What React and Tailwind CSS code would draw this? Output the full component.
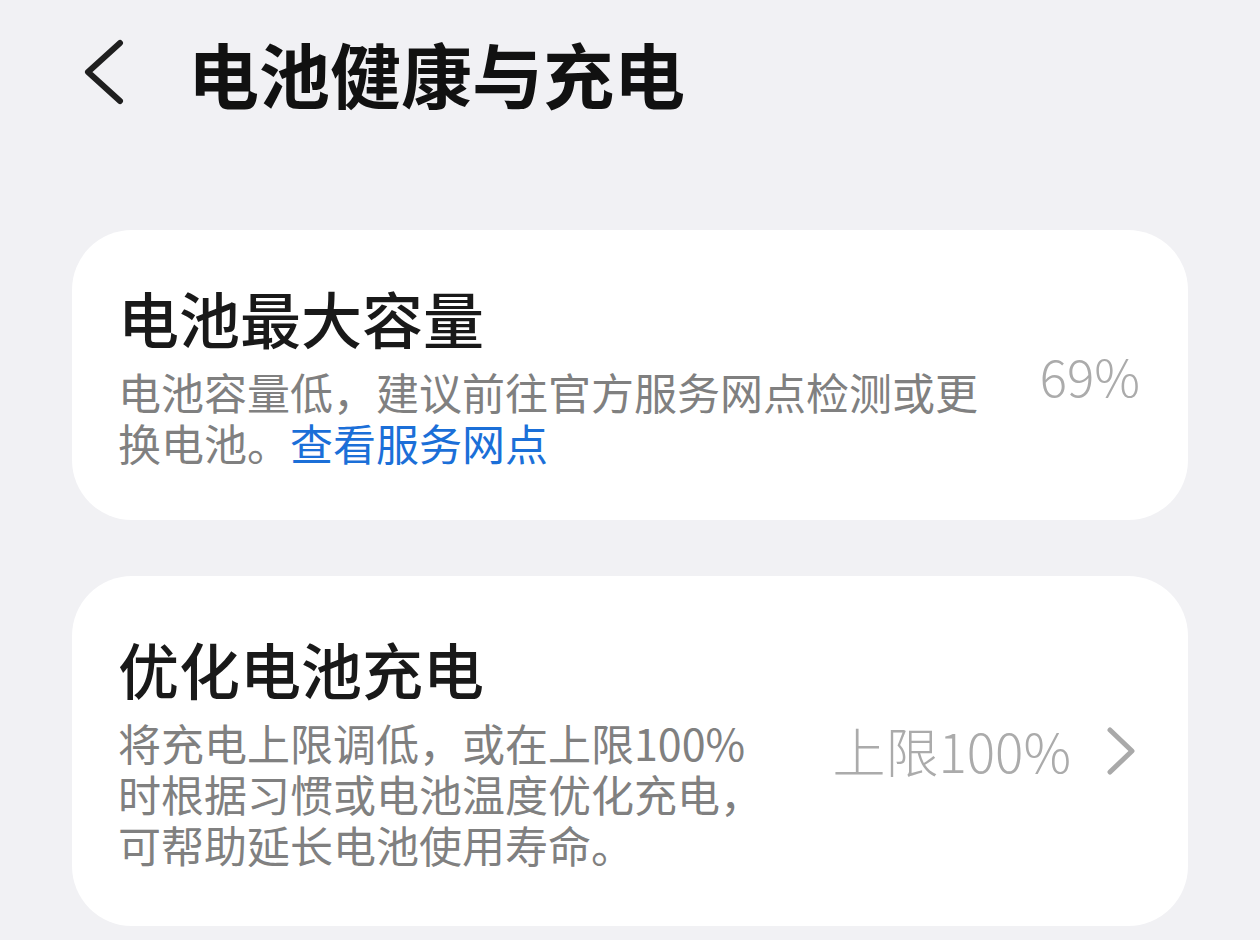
import React from 'react';

const font = { fontFamily: '"Noto Sans CJK SC", "Noto Sans", sans-serif' };

const BackIcon = () => (
  <svg width="44" height="66" viewBox="0 0 44 66" fill="none">
    <path d="M38 4 L6 33 L38 62" stroke="#1f1f1f" strokeWidth="6" strokeLinecap="round" strokeLinejoin="round" />
  </svg>
);

const ArrowIcon = () => (
  <svg width="32" height="48" viewBox="0 0 32 48" fill="none">
    <path d="M5 3 L27 24 L5 45" stroke="#a9a9a9" strokeWidth="5" strokeLinecap="round" strokeLinejoin="round" />
  </svg>
);

const SettingCard = ({ title, children, value, arrow, height, textWidth }) => (
  <div className={`flex items-center justify-between bg-white rounded-[60px] pl-[46px] ${arrow ? 'pr-[51px]' : 'pr-[48px]'} ${height}`}>
    <div className={`flex flex-col ${textWidth}`}>
      <div className="text-[61px] leading-[72px] font-medium text-[#191919]">{title}</div>
      <div className="mt-[12px] text-[43px] leading-[51px] text-[#808080]">{children}</div>
    </div>
    <div className="flex items-center gap-[34px]">
      <span className={`${arrow ? 'text-[53px]' : 'text-[51px]'} font-light text-[#ababab]`}>{value}</span>
      {arrow && <ArrowIcon />}
    </div>
  </div>
);

export default function App() {
  return (
    <div className="w-[1260px] h-[940px] overflow-hidden bg-[#f1f1f4]" style={font}>
      <div className="flex items-center h-[150px] pl-[82px] pb-[6px]">
        <BackIcon />
        <h1 className="ml-[62px] text-[71px] leading-none font-bold text-[#111]">电池健康与充电</h1>
      </div>

      <div className="flex flex-col gap-[56px] mx-[72px] mt-[80px]">
        <SettingCard title="电池最大容量" value="69%" height="h-[290px]" textWidth="w-[870px]">
          电池容量低，建议前往官方服务网点检测或更换电池。
          <span className="text-[#1b6fd8]">查看服务网点</span>
        </SettingCard>

        <SettingCard title="优化电池充电" value="上限100%" arrow height="h-[350px]" textWidth="w-[660px]">
          将充电上限调低，或在上限100%时根据习惯或电池温度优化充电，可帮助延长电池使用寿命。
        </SettingCard>
      </div>
    </div>
  );
}
